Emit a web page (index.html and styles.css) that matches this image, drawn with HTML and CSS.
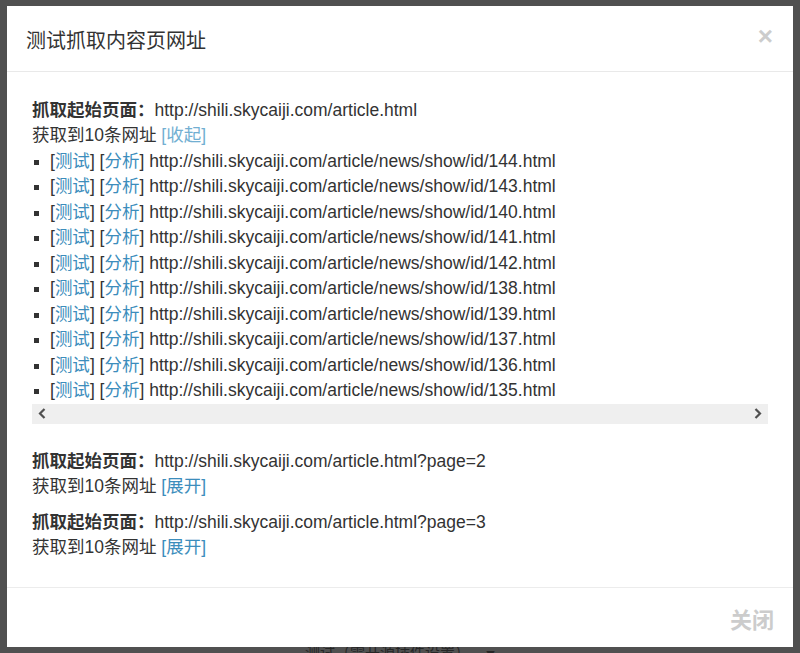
FILE: index.html
```html
<!DOCTYPE html>
<html lang="zh-CN">
<head>
<meta charset="utf-8">
<title>测试抓取内容页网址</title>
<link rel="stylesheet" href="styles.css">
</head>
<body>
<div class="backdrop">
  <div class="modal">
    <div class="modal-header">
      <h4 class="modal-title">测试抓取内容页网址</h4>
      <span class="close">×</span>
    </div>
    <div class="modal-body">
      <div class="section section-open">
        <div class="line"><b>抓取起始页面：</b>http://shili.skycaiji.com/article.html</div>
        <div class="line">获取到10条网址 <a class="toggle active">[收起]</a></div>
        <ul class="urls">
          <li>[<a>测试</a>] [<a>分析</a>] http://shili.skycaiji.com/article/news/show/id/144.html</li>
          <li>[<a>测试</a>] [<a>分析</a>] http://shili.skycaiji.com/article/news/show/id/143.html</li>
          <li>[<a>测试</a>] [<a>分析</a>] http://shili.skycaiji.com/article/news/show/id/140.html</li>
          <li>[<a>测试</a>] [<a>分析</a>] http://shili.skycaiji.com/article/news/show/id/141.html</li>
          <li>[<a>测试</a>] [<a>分析</a>] http://shili.skycaiji.com/article/news/show/id/142.html</li>
          <li>[<a>测试</a>] [<a>分析</a>] http://shili.skycaiji.com/article/news/show/id/138.html</li>
          <li>[<a>测试</a>] [<a>分析</a>] http://shili.skycaiji.com/article/news/show/id/139.html</li>
          <li>[<a>测试</a>] [<a>分析</a>] http://shili.skycaiji.com/article/news/show/id/137.html</li>
          <li>[<a>测试</a>] [<a>分析</a>] http://shili.skycaiji.com/article/news/show/id/136.html</li>
          <li>[<a>测试</a>] [<a>分析</a>] http://shili.skycaiji.com/article/news/show/id/135.html</li>
        </ul>
        <div class="hscroll">
          <svg class="arrow" width="8" height="11" viewBox="0 0 8 11"><path d="M6.5 1 L2 5.5 L6.5 10" fill="none" stroke="#505050" stroke-width="2.2"/></svg>
          <svg class="arrow" width="8" height="11" viewBox="0 0 8 11"><path d="M1.5 1 L6 5.5 L1.5 10" fill="none" stroke="#505050" stroke-width="2.2"/></svg>
        </div>
      </div>
      <div class="section">
        <div class="line"><b>抓取起始页面：</b>http://shili.skycaiji.com/article.html?page=2</div>
        <div class="line">获取到10条网址 <a class="toggle">[展开]</a></div>
      </div>
      <div class="section">
        <div class="line"><b>抓取起始页面：</b>http://shili.skycaiji.com/article.html?page=3</div>
        <div class="line">获取到10条网址 <a class="toggle">[展开]</a></div>
      </div>
    </div>
    <div class="modal-footer">
      <span class="btn-close">关闭</span>
    </div>
  </div>
  <div class="behind">测试（需开源插件设置）<span class="caret">▼</span></div>
</div>
</body>
</html>
```

FILE: styles.css
```css
html, body {
  margin: 0;
  padding: 0;
}
body {
  font-family: "Liberation Sans", "Noto Sans CJK SC", Arial, sans-serif;
  color: #333;
  background: #505050;
}
.backdrop {
  width: 800px;
  height: 653px;
  overflow: hidden;
  background: #505050;
}
.modal {
  position: relative;
  z-index: 1;
  margin: 6px 7px 0 7px;
  width: 786px;
  height: 641px;
  background: #fff;
  display: flex;
  flex-direction: column;
}
.modal-header {
  flex: 0 0 auto;
  height: 66px;
  box-sizing: border-box;
  padding: 0 20px 0 19px;
  border-bottom: 1px solid #e9e9e9;
  display: flex;
  align-items: center;
  justify-content: space-between;
}
.modal-title {
  margin: 0;
  font-family: "Noto Sans CJK SC", "Liberation Sans", sans-serif;
  font-weight: normal;
  font-size: 20px;
  line-height: 28px;
  color: #333;
  padding-top: 2px;
}
.close {
  font-family: "Liberation Sans", Arial, sans-serif;
  font-weight: bold;
  font-size: 26px;
  line-height: 26px;
  color: #cccccc;
  margin-top: -6px;
}
.modal-body {
  flex: 1 1 auto;
  padding: 25.5px 25px 25.5px 25px;
  font-size: 17.5px;
  line-height: 25.5px;
}
.line {
  white-space: nowrap;
}
.line b {
  font-weight: bold;
  color: #333;
}
a {
  color: #3c8dbc;
  text-decoration: none;
}
a.active {
  color: #72afd2;
}
.section {
  margin-bottom: 10px;
}
.section:last-child {
  margin-bottom: 0;
}
.section-open {
  margin-bottom: 25px;
}
.urls {
  margin: 0;
  padding: 0 0 0 18px;
  list-style: square;
  white-space: nowrap;
}
.urls li::marker {
  font-size: 15px;
}
.hscroll {
  height: 20px;
  background: #efefef;
  display: flex;
  align-items: center;
  justify-content: space-between;
  padding: 0 6px 0 6px;
}
.arrow {
  display: block;
}
.modal-footer {
  flex: 0 0 auto;
  height: 59px;
  border-top: 1px solid #ececec;
  display: flex;
  align-items: center;
  justify-content: flex-end;
  padding: 0 19px;
}
.btn-close {
  font-family: "Noto Sans CJK SC", sans-serif;
  font-weight: bold;
  font-size: 22px;
  line-height: 28px;
  color: #cccccc;
}
.behind {
  margin-top: -7px;
  padding-left: 305px;
  font-family: "Noto Sans CJK SC", sans-serif;
  font-size: 15px;
  line-height: 24px;
  color: #262626;
  white-space: nowrap;
}
.caret {
  font-size: 9px;
  margin-left: 16px;
}
```
